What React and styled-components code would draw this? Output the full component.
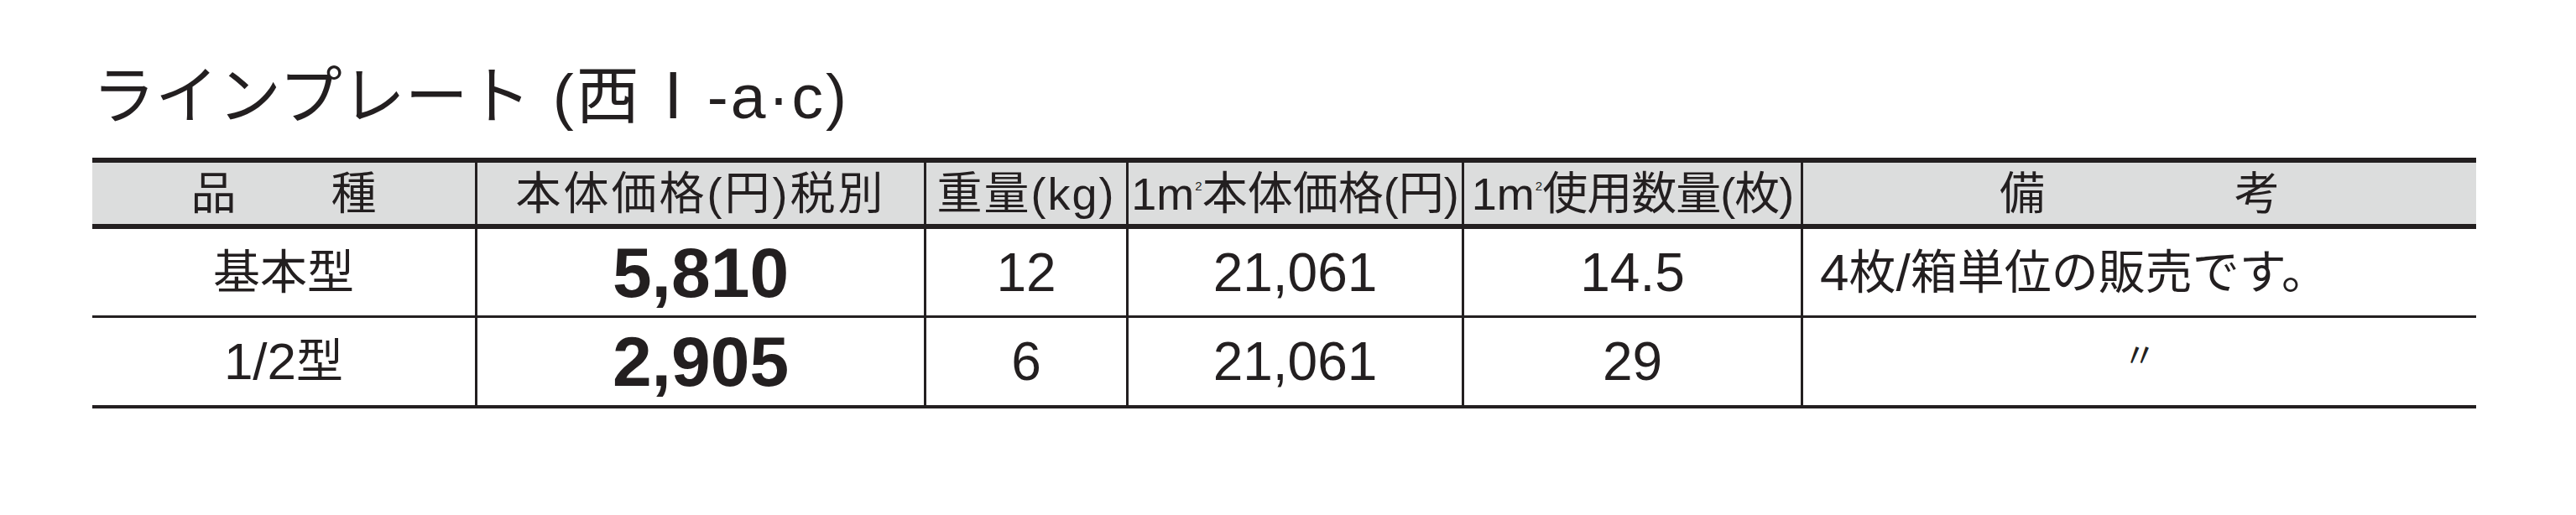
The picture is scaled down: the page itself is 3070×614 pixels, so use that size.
import React from "react";
import styled, { createGlobalStyle } from "styled-components";

const GlobalStyle = createGlobalStyle`
  html, body {
    margin: 0;
    padding: 0;
    background: #ffffff;
  }
  body {
    font-family: "Liberation Sans", "Noto Sans CJK JP", sans-serif;
    color: #231f20;
  }
`;

const INK = "#231f20";
const COLS = "456px 535px 241px 400px 404px 805px";

const Page = styled.div`
  width: 3070px;
  height: 614px;
  box-sizing: border-box;
  padding: 78px 0 0 110px;
`;

const Title = styled.h1`
  margin: 0 0 35px;
  font-size: 75px;
  font-weight: 400;
  line-height: 75px;
  white-space: nowrap;
`;

const TitleNote = styled.span`
  margin-left: 26px;
  letter-spacing: 3px;
`;

const Table = styled.div`
  width: 2841px;
`;

const Row = styled.div`
  display: grid;
  grid-template-columns: ${COLS};
  height: ${(p) => p.$h}px;
  border-top: ${(p) => p.$top || 0}px solid ${INK};
  border-bottom: ${(p) => p.$bottom}px solid ${INK};
  background: ${(p) => (p.$head ? "#dcdddd" : "#ffffff")};
`;

const Cell = styled.div`
  display: flex;
  align-items: center;
  justify-content: ${(p) => p.$align || "center"};
  gap: ${(p) => p.$gap || 0}px;
  padding-left: ${(p) => p.$pad || 0}px;
  border-left: 3px solid ${INK};
  white-space: nowrap;
  font-size: ${(p) => p.$size || 56}px;
  font-weight: ${(p) => (p.$bold ? 700 : 400)};
  line-height: 1;

  &:first-child {
    border-left: 0;
  }
`;

const HeadText = styled.span`
  font-size: 54px;
  letter-spacing: ${(p) => p.$ls || 0}px;
`;

const Num = styled.span`
  font-size: 62px;
`;

const Sup = styled.span`
  font-size: 15px;
  align-self: flex-start;
  margin-top: 20px;
  margin-left: 1px;
`;

const Ditto = styled.span`
  font-size: 40px;
  margin-top: -14px;
`;

const rows = [
  {
    key: "basic",
    name: <>基本型</>,
    price: "5,810",
    weight: "12",
    perM2: "21,061",
    count: "14.5",
    note: (
      <>
        <Num>4</Num>枚<Num>/</Num>箱単位の販売です。
      </>
    ),
  },
  {
    key: "half",
    name: (
      <>
        <Num>1/2</Num>型
      </>
    ),
    price: "2,905",
    weight: "6",
    perM2: "21,061",
    count: "29",
    note: null,
  },
];

export default function App() {
  return (
    <Page>
      <GlobalStyle />
      <Title>
        ラインプレート<TitleNote>(西Ⅰ-a·c)</TitleNote>
      </Title>
      <Table>
        <Row $head $h={73} $top={6} $bottom={6}>
          <Cell $gap={113}>
            <HeadText>品</HeadText>
            <HeadText>種</HeadText>
          </Cell>
          <Cell>
            <HeadText $ls={3}>本体価格(円)税別</HeadText>
          </Cell>
          <Cell>
            <HeadText $ls={2}>重量(kg)</HeadText>
          </Cell>
          <Cell>
            <HeadText>1m</HeadText>
            <Sup>2</Sup>
            <HeadText>本体価格(円)</HeadText>
          </Cell>
          <Cell>
            <HeadText>1m</HeadText>
            <Sup>2</Sup>
            <HeadText $ls={-1}>使用数量(枚)</HeadText>
          </Cell>
          <Cell $gap={226}>
            <HeadText>備</HeadText>
            <HeadText>考</HeadText>
          </Cell>
        </Row>
        {rows.map((r, i) => (
          <Row key={r.key} $h={i === 0 ? 103 : 104} $bottom={i === rows.length - 1 ? 4 : 3}>
            <Cell>{r.name}</Cell>
            <Cell $bold $size={84}>{r.price}</Cell>
            <Cell $size={64}>{r.weight}</Cell>
            <Cell $size={64}>{r.perM2}</Cell>
            <Cell $size={64}>{r.count}</Cell>
            {r.note ? (
              <Cell $align="flex-start" $pad={20}>{r.note}</Cell>
            ) : (
              <Cell>
                <Ditto>〃</Ditto>
              </Cell>
            )}
          </Row>
        ))}
      </Table>
    </Page>
  );
}
